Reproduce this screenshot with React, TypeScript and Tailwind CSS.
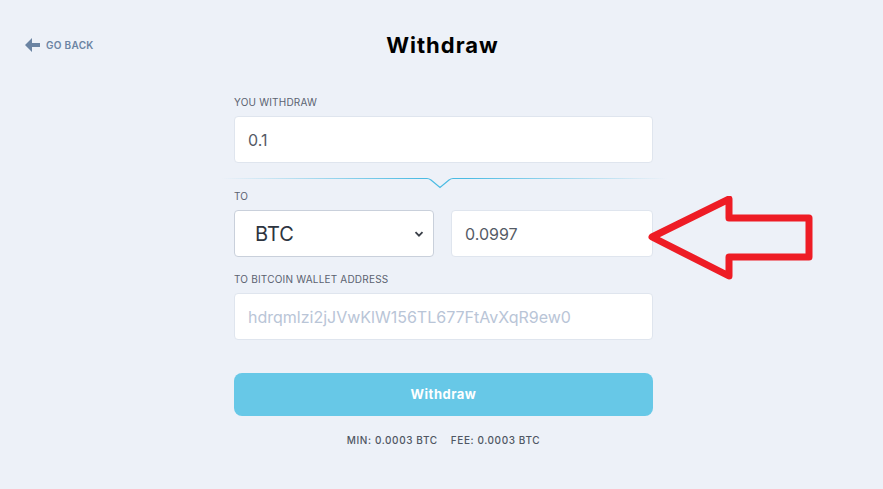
const FONT = { fontFamily: "Inter, 'Noto Sans', sans-serif" };

const Label = ({ children }: { children: string }) => (
  <div className="text-[10px] leading-none uppercase text-[#5b6270] tracking-[0.2px] mb-[9px]">{children}</div>
);

const Divider = () => (
  <svg width="446" height="14" viewBox="0 0 446 14" className="block -mx-[13px]">
    <defs>
      <linearGradient id="dv" x1="0" x2="1" y1="0" y2="0">
        <stop offset="0" stopColor="#5bc0e4" stopOpacity="0" />
        <stop offset="0.45" stopColor="#4bbbe3" />
        <stop offset="0.55" stopColor="#4bbbe3" />
        <stop offset="1" stopColor="#5bc0e4" stopOpacity="0" />
      </linearGradient>
    </defs>
    <path d="M0 2.5 H206 Q208 2.5 210 4 L219 11.5 L228 4 Q230 2.5 232 2.5 H446" fill="none" stroke="url(#dv)" strokeWidth="1.2" />
  </svg>
);

export default function App() {
  return (
    <div className="min-h-[489px] w-full bg-[#edf1f8]" style={FONT}>
      <div className="grid grid-cols-[1fr_auto_1fr] items-center pt-[31px]">
        <div className="flex items-center gap-[5px] pl-[25px] text-[10px] font-semibold tracking-[0.3px] text-[#6b84a3]">
          <svg width="16" height="14" viewBox="0 0 16 14">
            <path d="M7 0 L0 7 L7 14 V9 H15 V5 H7 Z" fill="#6b84a3" />
          </svg>
          GO BACK
        </div>
        <h1 className="text-[22px] leading-[28px] font-bold tracking-[1px] text-black pl-[2px]">Withdraw</h1>
        <div />
      </div>

      <div className="relative w-[419px] ml-[234px] mt-[38px]">
        <Label>YOU WITHDRAW</Label>
        <div className="h-[47px] bg-white rounded-[4px] border border-[#dfe5ee] flex items-center px-[13px] text-[16px] text-[#555b66]">
          0.1
        </div>

        <div className="mt-[13px]">
          <Divider />
        </div>

        <div className="mt-[1px]">
          <Label>TO</Label>
          <div className="flex gap-[17px]">
            <div className="w-[200px] h-[47px] bg-white rounded-[4px] border border-[#c9d0db] flex items-center justify-between pl-[20px] pr-[8px] text-[20px] text-[#2d3440]">
              BTC
              <svg width="12" height="12" viewBox="0 0 12 12">
                <path d="M2.5 4.2 L6 7.7 L9.5 4.2" fill="none" stroke="#3a3f48" strokeWidth="1.8" />
              </svg>
            </div>
            <div className="flex-1 h-[47px] bg-white rounded-[4px] border border-[#dfe5ee] flex items-center px-[13px] text-[16px] text-[#555b66]">
              0.0997
            </div>
          </div>
        </div>

        <div className="mt-[17px]">
          <Label>TO BITCOIN WALLET ADDRESS</Label>
          <div className="h-[47px] bg-white rounded-[4px] border border-[#dfe5ee] flex items-center px-[13px] text-[16px] text-[#b9c5d7]">
            hdrqmlzi2jJVwKlW156TL677FtAvXqR9ew0
          </div>
        </div>

        <button className="mt-[33px] w-full h-[43px] rounded-[8px] bg-[#67c8e7] text-white text-[13px] font-bold tracking-[0.5px]">
          Withdraw
        </button>

        <div className="mt-[19px] text-center text-[10px] font-medium tracking-[0.6px] text-[#4f5663] leading-none">
          MIN: 0.0003 BTC&nbsp;&nbsp;&nbsp;&nbsp;FEE: 0.0003 BTC
        </div>

        <svg width="170" height="90" viewBox="0 0 170 90" className="absolute left-[412px] top-[99px] pointer-events-none">
          <path
            d="M6 41 L83 3 V22 H163 V61 H83 V80 Z"
            fill="none"
            stroke="#ee1c25"
            strokeWidth="7"
            strokeLinejoin="round"
          />
        </svg>
      </div>
    </div>
  );
}
